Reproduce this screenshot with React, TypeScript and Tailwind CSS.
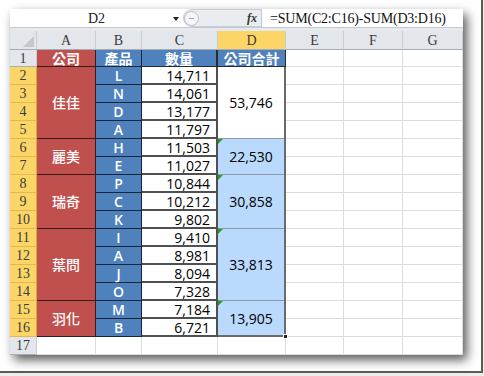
import React from "react"

const rows = [
  { co: "佳佳", span: 4, items: [["L", "14,711"], ["N", "14,061"], ["D", "13,177"], ["A", "11,797"]], total: "53,746" },
  { co: "麗美", span: 2, items: [["H", "11,503"], ["E", "11,027"]], total: "22,530" },
  { co: "瑞奇", span: 3, items: [["P", "10,844"], ["C", "10,212"], ["K", "9,802"]], total: "30,858" },
  { co: "葉問", span: 4, items: [["I", "9,410"], ["A", "8,981"], ["J", "8,094"], ["O", "7,328"]], total: "33,813" },
  { co: "羽化", span: 2, items: [["M", "7,184"], ["B", "6,721"]], total: "13,905" },
]

const serif = "font-['Liberation_Serif','Noto_Sans_CJK_TC',serif]"
const cjk = "font-['Noto_Sans_CJK_TC','Noto_Sans_CJK_SC',sans-serif]"
const num = "font-['Open_Sans','Liberation_Sans',sans-serif]"

const headCell = `flex items-center justify-center border-r border-b border-r-[#c8cdd4] border-b-[#a3acb8] text-[14px] text-[#3b3b3b] ${serif}`

function ColHead({ label, active }: { label: string; active?: boolean }) {
  return (
    <div className={`h-[19px] ${headCell} ${active ? "bg-[#fbd667]" : "bg-[#e3e7ec]"}`}>{label}</div>
  )
}

function Blank({ h = "h-[18px]" }: { h?: string }) {
  return <div className={`${h} bg-white border-r border-b border-[#dadcdf]`} />
}

function EmptyCol({ w, label }: { w: string; label: string }) {
  return (
    <div className={`flex flex-col ${w}`}>
      <ColHead label={label} />
      <Blank h="h-[17px]" />
      {Array.from({ length: 16 }).map((_, i) => (
        <Blank key={i} />
      ))}
    </div>
  )
}

function Tri() {
  return <span className="absolute left-0 top-0 w-0 h-0 border-t-[5px] border-r-[5px] border-t-[#21a121] border-r-transparent" />
}

export default function App() {
  const allItems = rows.flatMap((r) => r.items)
  return (
    <div className="w-[484px] h-[376px] bg-[#efefea]">
      <div className="w-[483px] h-[373px] bg-white border-r-2 border-b-2 border-[#5c5c56] pl-[10px] pt-[9px]">
        <div className="w-[453px] h-[346px] bg-white flex flex-col shadow-[4px_5px_10px_rgba(0,0,0,0.65)]">
          {/* formula bar */}
          <div className="h-[19px] flex border-b border-[#c3c9d1]">
            <div className={`w-[173px] relative flex items-center justify-center text-[14px] text-[#222] ${serif}`}>
              D2
              <span className="absolute right-[4px] top-[8px] w-0 h-0 border-x-[3px] border-t-[4px] border-x-transparent border-t-[#222]" />
            </div>
            <div className="w-[78px] flex items-center bg-[#e9ecf0] rounded-l-full border border-[#c9ced6] border-r-0">
              <div className="w-[15px] h-[15px] rounded-full border border-[#b7bdc6] bg-[#f4f5f7] flex items-center justify-center">
                <span className="w-[5px] h-[1px] bg-[#a2a8b1]" />
              </div>
              <span className={`ml-auto mr-[4px] italic font-bold text-[12px] text-[#333] ${serif}`}>fx</span>
            </div>
            <div className={`flex-1 flex items-center pl-[8px] border-l border-[#c3c9d1] text-[14px] text-[#111] tracking-[-0.2px] ${serif}`}>
              =SUM(C2:C16)-SUM(D3:D16)
            </div>
          </div>
          <div className="h-[3px] bg-[#e6e9ed]" />

          {/* grid */}
          <div className="flex">
            {/* row headers */}
            <div className="flex flex-col w-[27px]">
              <div className="h-[19px] relative bg-[#e3e7ec] border-r border-b border-r-[#c8cdd4] border-b-[#a3acb8]">
                <span className="absolute right-[2px] bottom-[2px] w-0 h-0 border-b-[11px] border-l-[11px] border-b-[#c2c7ce] border-l-transparent" />
              </div>
              <div className={`h-[17px] bg-[#e3e7ec] ${headCell}`}>1</div>
              {Array.from({ length: 15 }).map((_, i) => (
                <div key={i} className={`h-[18px] bg-[#fbd667] ${headCell} border-b-[#e2b857] border-r-[#d9a83e]`}>{i + 2}</div>
              ))}
              <div className={`h-[18px] bg-[#e3e7ec] ${headCell}`}>17</div>
            </div>

            {/* A */}
            <div className="flex flex-col w-[59px]">
              <ColHead label="A" />
              <div className={`h-[17px] bg-[#c0504d] border-r border-b border-[#3a1c1b] flex items-center justify-center text-white font-bold text-[14px] ${cjk}`}>公司</div>
              {rows.map((r) => (
                <div key={r.co} style={{ height: r.span * 18 }} className={`bg-[#c0504d] border-r border-b border-[#3a1c1b] flex items-center justify-center text-white font-medium text-[14px] ${cjk}`}>
                  {r.co}
                </div>
              ))}
              <Blank />
            </div>

            {/* B */}
            <div className="flex flex-col w-[46px]">
              <ColHead label="B" />
              <div className={`h-[17px] bg-[#4f81bd] border-r border-b border-[#17263a] flex items-center justify-center text-white font-bold text-[14px] ${cjk}`}>產品</div>
              {allItems.map(([p], i) => (
                <div key={i} className={`h-[18px] bg-[#4f81bd] border-r border-b border-[#17263a] flex items-center justify-center text-white font-semibold text-[14px] ${num}`}>
                  {p}
                </div>
              ))}
              <Blank />
            </div>

            {/* C */}
            <div className="flex flex-col w-[76px]">
              <ColHead label="C" />
              <div className={`h-[17px] bg-[#4f81bd] border-r-2 border-b border-[#2a2a2a] flex items-center justify-center text-white font-bold text-[14px] ${cjk}`}>數量</div>
              {allItems.map(([, n], i) => (
                <div key={i} className={`h-[18px] bg-white border-r-2 border-b-2 border-[#505050] flex items-center justify-end pr-[6px] text-[14px] font-medium text-black ${num}`}>
                  {n}
                </div>
              ))}
              <Blank />
            </div>

            {/* D */}
            <div className="flex flex-col w-[68px]">
              <ColHead label="D" active />
              <div className={`h-[17px] bg-[#4f81bd] border-r border-b border-[#2a2a2a] flex items-center justify-center text-white font-bold text-[14px] ${cjk}`}>公司合計</div>
              <div className="h-[270px] relative flex flex-col border-2 border-t-0 border-l-0 border-[#6a6a6a]">
                {rows.map((r, i) => (
                  <div
                    key={r.co}
                    style={i === rows.length - 1 ? undefined : { height: r.span * 18 }}
                    className={`relative flex items-center justify-center text-[14px] font-medium text-black ${num} ${i === 0 ? "bg-white" : "bg-[#b9dafc]"} ${i === rows.length - 1 ? "flex-1" : "border-b border-[#8c9aab]"}`}
                  >
                    {i > 0 && <Tri />}
                    {r.total}
                  </div>
                ))}
                <span className="absolute right-[-4px] bottom-[-4px] w-[5px] h-[5px] bg-[#222] border border-white" />
              </div>
              <Blank />
            </div>

            <EmptyCol w="w-[58px]" label="E" />
            <EmptyCol w="w-[59px]" label="F" />
            <EmptyCol w="w-[60px]" label="G" />
          </div>
        </div>
      </div>
    </div>
  )
}
